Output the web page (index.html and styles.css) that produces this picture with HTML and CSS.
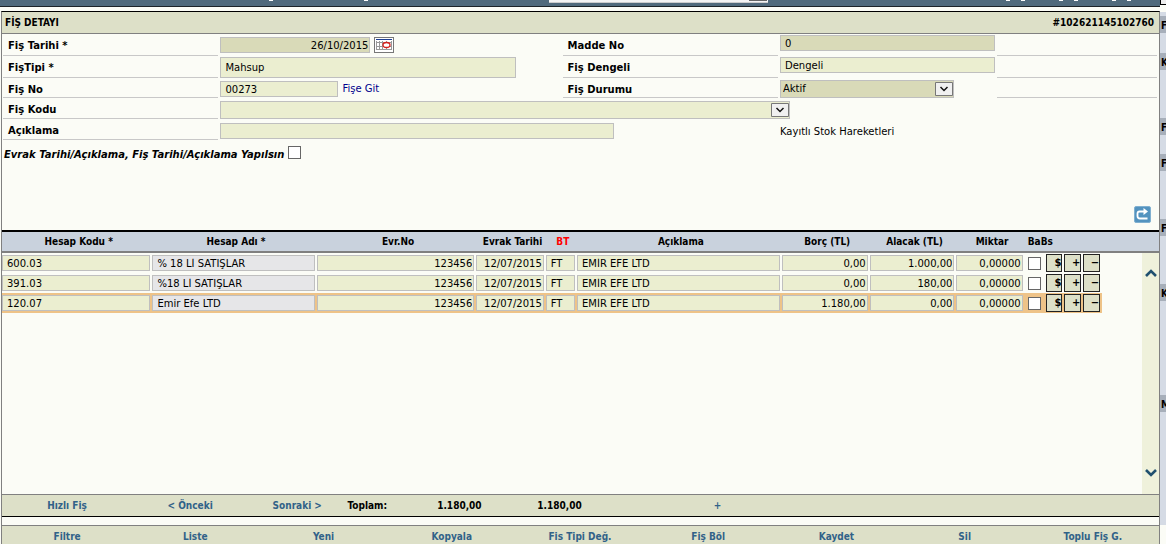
FILE: index.html
```html
<!DOCTYPE html>
<html lang="tr">
<head>
<meta charset="utf-8">
<title>Fiş Detayı</title>
<link rel="stylesheet" href="styles.css">
</head>
<body>
<div class="app">
<main class="main">
  <header class="topbar">
    <div class="top-space"><i></i><i></i></div>
    <div class="top-combo"><i></i></div>
    <div class="top-links"><span><i></i><i></i></span><span><i></i><i></i></span><span><i></i><i></i></span></div>
  </header>
  <section class="panel">
    <div class="panel-head"><h1>FİŞ DETAYI</h1><b>#102621145102760</b></div>
    <form class="form">
      <label class="lab" for="tarih">Fiş Tarihi *</label>
      <div class="val"><input id="tarih" class="box ro num w-date" value="26/10/2015" readonly>
        <button type="button" class="cal" aria-label="Takvim"><svg width="18" height="14" viewBox="0 0 18 14"><path fill="#fff" d="M0 0h18v14H0z"/><path fill="#1c3f94" d="M1 1h16v1H1z"/><path stroke="#999" d="M1 4.500h15M1 8.500h15M1 11.500h15M1.500 3v9M4.500 3v9M7.500 3v9M11.500 3v9M16.500 3v9"/><ellipse cx="11.500" cy="7" rx="3.500" ry="2.500" fill="#fff" stroke="#d5201c" stroke-width="1.300"/></svg></button></div>
      <label class="lab" for="madde">Madde No</label>
      <div class="val top"><input id="madde" class="box ro w-full" value="0" readonly></div>
      <div class="rule"></div>

      <label class="lab" for="tip">FişTipi *</label>
      <div class="val"><input id="tip" class="box tall w-type" value="Mahsup"></div>
      <label class="lab" for="denge">Fiş Dengeli</label>
      <div class="val top"><input id="denge" class="box w-full" value="Dengeli"></div>
      <div class="rule"></div>

      <label class="lab" for="no">Fiş No</label>
      <div class="val low"><input id="no" class="box w-no" value="00273"><a href="#">Fişe Git</a></div>
      <label class="lab" for="durum">Fiş Durumu</label>
      <div class="val low"><span class="combo ro w-state"><select id="durum"><option>Aktif</option></select><svg class="arrow" viewBox="0 0 18 14"><path d="M.5.5h17v13H.5z" fill="#f0f0f0" stroke="#777"/><path d="M5.500 5l3.500 3.500L12.500 5" fill="none" stroke="#111" stroke-width="1.500"/></svg></span></div>
      <div class="rule"></div>

      <label class="lab" for="kod">Fiş Kodu</label>
      <div class="val wide"><span class="combo w-code"><select id="kod"><option></option></select><svg class="arrow" viewBox="0 0 18 14"><path d="M.5.5h17v13H.5z" fill="#f0f0f0" stroke="#777"/><path d="M5.500 5l3.500 3.500L12.500 5" fill="none" stroke="#111" stroke-width="1.500"/></svg></span></div>

      <label class="lab" for="acik">Açıklama</label>
      <div class="val desc"><input id="acik" class="box w-desc"></div>
      <div class="val note">Kayıtlı Stok Hareketleri</div>
    </form>
    <div class="check-row"><label for="evrak">Evrak Tarihi/Açıklama, Fiş Tarihi/Açıklama Yapılsın</label><input type="checkbox" id="evrak" class="tick"></div>
    <div class="tools"><button type="button" class="refresh" aria-label="Yenile"><svg width="17" height="17" viewBox="0 0 17 17"><rect x=".5" y=".5" width="16" height="16" rx="1.500" fill="#5393bf" stroke="#80b0d0"/><path d="M10.500 5.500H5.500Q3.500 5.500 3.500 7.500v2.500q0 2.500 2.500 2.500h7.500" fill="none" stroke="#fff" stroke-width="1.800"/><path d="M9.500 2L14 5.500 9.500 9z" fill="#fff"/></svg></button></div>
    <div class="grid">
      <table class="lines">
        <colgroup><col class="c1"><col class="c2"><col class="c3"><col class="c4"><col class="c5"><col class="c6"><col class="c7"><col class="c8"><col class="c9"><col class="c10"><col class="c11"><col></colgroup>
        <thead><tr><th>Hesap Kodu *</th><th>Hesap Adı *</th><th>Evr.No</th><th>Evrak Tarihi</th><th class="red">BT</th><th>Açıklama</th><th>Borç (TL)</th><th>Alacak (TL)</th><th>Miktar</th><th>BaBs</th><th></th><th></th></tr></thead>
        <tbody>
        <tr><td><input class="box" aria-label="Hesap Kodu" value="600.03"></td><td><input class="box name" aria-label="Hesap Adı" value="% 18 Lİ SATIŞLAR" readonly></td><td><input class="box num" aria-label="Evr.No" value="123456"></td><td><input class="box num" aria-label="Evrak Tarihi" value="12/07/2015"></td><td><input class="box" aria-label="BT" value="FT"></td><td><input class="box" aria-label="Açıklama" value="EMİR EFE LTD"></td><td><input class="box num" aria-label="Borç" value="0,00"></td><td><input class="box num" aria-label="Alacak" value="1.000,00"></td><td><input class="box num" aria-label="Miktar" value="0,00000"></td><td class="mid"><input type="checkbox" class="tick" aria-label="BaBs"></td><td><div class="acts"><button>$</button><button>+</button><button>−</button></div></td><td></td></tr>
        <tr><td><input class="box" aria-label="Hesap Kodu" value="391.03"></td><td><input class="box name" aria-label="Hesap Adı" value="%18 Lİ SATIŞLAR" readonly></td><td><input class="box num" aria-label="Evr.No" value="123456"></td><td><input class="box num" aria-label="Evrak Tarihi" value="12/07/2015"></td><td><input class="box" aria-label="BT" value="FT"></td><td><input class="box" aria-label="Açıklama" value="EMİR EFE LTD"></td><td><input class="box num" aria-label="Borç" value="0,00"></td><td><input class="box num" aria-label="Alacak" value="180,00"></td><td><input class="box num" aria-label="Miktar" value="0,00000"></td><td class="mid"><input type="checkbox" class="tick" aria-label="BaBs"></td><td><div class="acts"><button>$</button><button>+</button><button>−</button></div></td><td></td></tr>
        <tr class="current"><td><input class="box" aria-label="Hesap Kodu" value="120.07"></td><td><input class="box name" aria-label="Hesap Adı" value="Emir Efe LTD" readonly></td><td><input class="box num" aria-label="Evr.No" value="123456"></td><td><input class="box num" aria-label="Evrak Tarihi" value="12/07/2015"></td><td><input class="box" aria-label="BT" value="FT"></td><td><input class="box" aria-label="Açıklama" value="EMİR EFE LTD"></td><td><input class="box num" aria-label="Borç" value="1.180,00"></td><td><input class="box num" aria-label="Alacak" value="0,00"></td><td><input class="box num" aria-label="Miktar" value="0,00000"></td><td class="mid"><input type="checkbox" class="tick" aria-label="BaBs"></td><td><div class="acts"><button>$</button><button>+</button><button>−</button></div></td><td></td></tr>
        </tbody>
      </table>
      <div class="scroll"><svg width="12" height="9" viewBox="0 0 12 9"><path d="M1 8l5-5 5 5" fill="none" stroke="#20506f" stroke-width="2.600"/></svg><svg width="12" height="9" viewBox="0 0 12 9"><path d="M1 1l5 5 5-5" fill="none" stroke="#20506f" stroke-width="2.600"/></svg></div>
    </div>
    <div class="totals"><a href="#">Hızlı Fiş</a><a href="#">&lt; Önceki</a><a href="#">Sonraki &gt;</a><b>Toplam:</b><b>1.180,00</b><b>1.180,00</b><a href="#">+</a><span></span></div>
    <nav class="menu"><a href="#">Filtre</a><a href="#">Liste</a><a href="#">Yeni</a><a href="#">Kopyala</a><a href="#">Fis Tipi Değ.</a><a href="#">Fiş Böl</a><a href="#">Kaydet</a><a href="#">Sil</a><a href="#">Toplu Fiş G.</a></nav>
  </section>
</main>
<aside class="side">
  <div class="side-top"></div>
  <div class="side-body"><section class="s1"><h2>F</h2></section><section class="s2"><h2>K</h2></section><section class="s3"><h2>F</h2></section><section class="s2"><h2>F</h2></section><section class="s2"><h2>F</h2></section><section class="s4"><h2>K</h2></section><section><h2>M</h2></section></div>
</aside>
</div>
</body>
</html>
```
FILE: styles.css
```css
* { box-sizing: border-box; }
body { margin: 0; background: #fbfcf6; color: #000; font-family: "DejaVu Sans", sans-serif; font-size: 10px; line-height: 14px; overflow: hidden; }
a { text-decoration: none; color: #00008b; }
input, select, button { font: inherit; color: inherit; margin: 0; border-radius: 0; }
button { padding: 0; cursor: pointer; }
h1, h2, b, th, .totals, .menu { font-family: "DejaVu Sans Condensed", "DejaVu Sans", sans-serif; font-weight: bold; }
.lab, .check-row { font-weight: bold; }

.app { display: flex; height: 100vh; }
.main { flex: 1; min-width: 0; display: flex; flex-direction: column; }
.topbar { height: 7px; background: #506a7c; border-bottom: 1px solid #1c2328; display: flex; overflow: hidden; margin-bottom: 4px; }
.top-space { width: 549px; display: flex; gap: 91px; padding-left: 269px; }
.top-space i, .top-links i { width: 4px; height: 1px; background: #fff; }
.top-combo { width: 219px; height: 3px; background: #f4f4f4; border-bottom: 1px solid #ccc; display: flex; justify-content: flex-end; }
.top-combo i { width: 18px; height: 1px; background: #666; margin-right: 1px; }
.top-links { flex: 1; display: flex; justify-content: flex-end; gap: 34px; padding-right: 29px; }
.top-links span { display: flex; gap: 11px; }

.panel { flex: 1; min-height: 0; margin-left: 1px; display: flex; flex-direction: column; border: 1px solid #808080; border-top-color: #000; border-bottom: 0; }
.panel-head { display: flex; justify-content: space-between; align-items: center; height: 22px; padding: 0 5px 0 3px; background: #dde0c8; border-bottom: 1px solid #808080; }
h1, h2 { margin: 0; font-size: 10px; }

.form { display: grid; grid-template-columns: 216fr 341fr 216fr 216fr 160fr; grid-template-rows: 22px 22px 20px 21px 21px; column-gap: 2px; padding: 0 2px 0 1px; }
.lab { border-bottom: 1px solid #c8c8c8; padding: 5px 0 0 5px; line-height: 13px; }
.rule { border-bottom: 1px solid #c8c8c8; }
.val { display: flex; align-items: center; min-width: 0; gap: 4px; }
.top { align-items: flex-start; padding-top: 1px; }
.low { padding-top: 2px; }
.wide { grid-column: 2 / -1; align-items: flex-end; }
.desc { grid-column: 2 / 4; padding-top: 3px; }
.note { grid-column: 4 / -1; padding-top: 5px; }
.box { height: 16px; border: 1px solid #bfbfbf; background: #ebeed0; padding: 0 4px; min-width: 0; }
.box.ro, .combo.ro { background: #d9dab8; }
.box.name { background: #e6e6e8; }
.box.num { text-align: right; padding-right: 1px; }
.box.tall { height: 21px; }
.w-date { width: 150px; }
.w-full { width: 100%; }
.w-type { width: 296px; }
.w-no { width: 118px; }
.w-desc { width: 394px; }
.w-state { width: 174px; }
.w-code { width: 570px; }
.cal { width: 20px; height: 16px; border: 1px solid #777; background: #fff; overflow: hidden; display: flex; }
.combo { display: grid; grid-template-columns: 1fr 18px; height: 18px; align-items: center; border: 1px solid #bfbfbf; background: #ebeed0; }
.combo select { appearance: none; grid-area: 1 / 1 / 2 / 3; border: 0; background: transparent; padding: 0 2px; height: 16px; }
.arrow { grid-area: 1 / 2; width: 18px; height: 14px; pointer-events: none; }
.tick { appearance: none; width: 13px; height: 13px; border: 1px solid #666; background: #fff; }
.check-row { display: flex; align-items: flex-start; gap: 4px; padding: 6px 0 0 2px; font-style: italic; }
.check-row label { padding-top: 2px; }
.tools { display: flex; justify-content: flex-end; padding: 44px 8px 7px 0; }
.refresh { width: 17px; height: 17px; border: 0; background: none; display: flex; }

.grid { flex: 1; min-height: 0; display: grid; align-items: start; }
.lines { grid-area: 1 / 1; width: 100%; table-layout: fixed; border-collapse: separate; border-spacing: 0; }
.lines th { height: 23px; padding: 0 0 0 3px; background: #c9d2dd; border-top: 2px solid #000; border-bottom: 2px solid #808080; white-space: nowrap; }
.lines .red { color: #f00; }
.lines td { height: 20px; padding: 0 2px 0 0; vertical-align: middle; }
.lines .box { display: block; width: 100%; }
.current td:not(:last-child) { background: #eec388; }
.c1 { width: 13%; }
.c2 { width: 14.2%; }
.c3 { width: 13.8%; }
.c4 { width: 6%; }
.c5 { width: 2.7%; }
.c6 { width: 17.7%; }
.c7 { width: 7.6%; }
.c8 { width: 7.5%; }
.c9 { width: 5.9%; }
.c10 { width: 1.8%; }
.c11 { width: 4.9%; }
.mid .tick { display: block; margin: 0 auto; }
.acts { display: flex; gap: 2px; }
.acts button { flex: 1; height: 18px; border: 1px solid #222; background: #dde0c8; font-weight: bold; text-align: right; overflow: hidden; }
.scroll { grid-area: 1 / 1; justify-self: end; align-self: stretch; width: 17px; margin-top: 23px; padding: 15px 0 16px; background: #eff1db; display: flex; flex-direction: column; justify-content: space-between; align-items: center; }

.totals { display: grid; grid-template-columns: 130fr 116fr 98fr 42fr 142fr 58fr 258fr 312fr; align-items: center; height: 23px; text-align: center; background: #dde0c8; border-top: 1px solid #808080; border-bottom: 1px solid #000; }
.totals a, .menu a { color: #316288; }
.menu { display: grid; grid-template-columns: repeat(9, 1fr); height: 19px; margin-top: 8px; padding: 4px 2px 0 1px; text-align: center; background: #dde0c8; border-top: 1px solid #808080; }

.side { width: 6px; display: flex; flex-direction: column; overflow: hidden; }
.side-top { height: 5px; background: #eee; border-left: 1px solid #000; border-bottom: 1px solid #000; margin-bottom: 7px; }
.side-body { flex: 1; background: #d5dbe5; margin-bottom: 19px; padding-top: 4px; }
.side h2 { height: 17px; padding: 3px 0 0 1px; background: #a7afba; overflow: hidden; }
.s1 { height: 37px; }
.s2 { height: 65px; }
.s3 { height: 36px; }
.s4 { height: 111px; }
```
